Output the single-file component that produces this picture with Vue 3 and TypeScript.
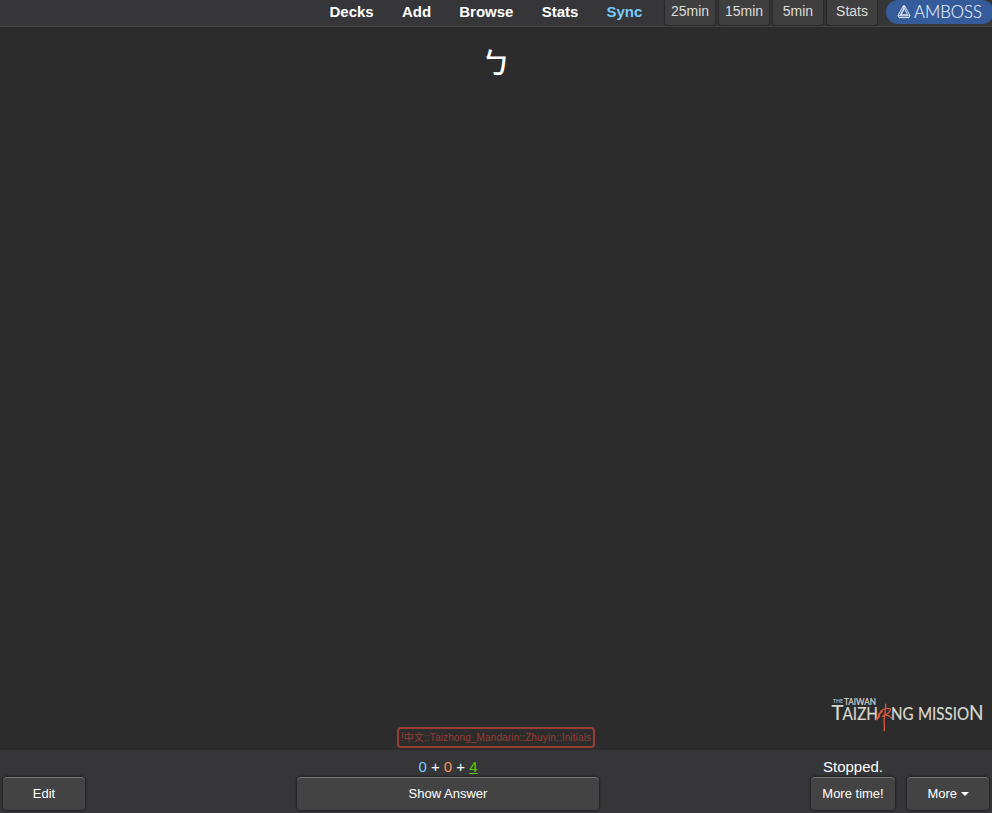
<script setup lang="ts">
interface NavItem {
  label: string
  active?: boolean
}

const navItems: NavItem[] = [
  { label: 'Decks' },
  { label: 'Add' },
  { label: 'Browse' },
  { label: 'Stats' },
  { label: 'Sync', active: true },
]
const timers: string[] = ['25min', '15min', '5min', 'Stats']
const counts = { fresh: 0, learning: 0, review: 4 }
</script>

<template>
  <div class="reviewer">
    <header class="topbar">
      <nav class="links">
        <a v-for="item in navItems" :key="item.label" :class="{ active: item.active }">{{ item.label }}</a>
      </nav>
      <div class="timers">
        <button v-for="timer in timers" :key="timer" class="timer">{{ timer }}</button>
      </div>
      <button class="amboss">
        <svg class="amboss-icon" viewBox="0 0 14 14" width="14" height="14">
          <path d="M6.2 0.9H7.8L13 10.8L12 12.6H2L1 10.8ZM7.8 0.9L3.4 9.8H10.6M6.2 0.9L10.6 9.8M1 10.8H13M7 4L3.6 10.8" />
        </svg>
        <svg class="amboss-word" width="69" height="20" viewBox="0 0 69 20">
          <text x="0" y="16" textLength="68" lengthAdjust="spacingAndGlyphs">AMBOSS</text>
        </svg>
      </button>
    </header>

    <main class="card">
      <div class="glyph">ㄅ</div>
      <div class="card-foot">
        <svg class="mission" viewBox="0 0 154 38" width="154" height="38">
          <text class="tiny" x="2" y="7" textLength="10" lengthAdjust="spacingAndGlyphs">THE</text>
          <text class="small" x="13" y="9" textLength="32" lengthAdjust="spacingAndGlyphs">TAIWAN</text>
          <text class="cap" x="0.5" y="23.5" textLength="12" lengthAdjust="spacingAndGlyphs">T</text>
          <text class="mid" x="11.5" y="23.5" textLength="35.5" lengthAdjust="spacingAndGlyphs">AIZH</text>
          <path
            class="brush"
            d="M54.6 8.2C55 12 53.6 19 53.2 24C53 28 53.8 31 53.2 34.5M50 14.8C53 13 57.5 11.8 59.5 13.2C59.5 15.5 55.5 18.6 51.5 20.4M53 19.4C56 18.8 59 20 61 22.2"
          />
          <path class="brush heavy" d="M50.8 15.4L47.6 18.6L48.2 20.2L45.6 23.4" />
          <text class="mid" x="60" y="23.5" textLength="22.5" lengthAdjust="spacingAndGlyphs">NG</text>
          <text class="mid" x="87" y="23.5" textLength="51" lengthAdjust="spacingAndGlyphs">MISSIO</text>
          <text class="cap" x="138" y="23.5" textLength="14.5" lengthAdjust="spacingAndGlyphs">N</text>
        </svg>
        <div class="tag">!中文::Taizhong_Mandarin::Zhuyin::Initials</div>
      </div>
    </main>

    <footer class="bottombar">
      <div class="group left">
        <button class="btn">Edit</button>
      </div>
      <div class="group middle">
        <div class="counts">
          <span class="new">{{ counts.fresh }}</span> + <span class="learn">{{ counts.learning }}</span> +
          <span class="review">{{ counts.review }}</span>
        </div>
        <button class="btn">Show Answer</button>
      </div>
      <div class="group time">
        <div class="status">Stopped.</div>
        <button class="btn">More time!</button>
      </div>
      <div class="group more">
        <button class="btn">More <span class="caret"></span></button>
      </div>
    </footer>
  </div>
</template>

<style>
body {
  margin: 0;
  background: #2c2c2c;
  overflow: hidden;
}
</style>

<style scoped>
.reviewer {
  display: flex;
  flex-direction: column;
  width: 992px;
  height: 813px;
  overflow: hidden;
  color: #fff;
  background: #2c2c2c;
  font-family: "Liberation Sans", "Noto Sans CJK TC", sans-serif;
}
button {
  box-sizing: border-box;
  margin: 0;
  font-family: inherit;
}
.topbar {
  display: flex;
  align-items: flex-start;
  box-sizing: border-box;
  height: 27px;
  padding-left: 329.5px;
  background: #363638;
  border-bottom: 1px solid #454545;
}
.links {
  display: flex;
  gap: 28.2px;
  width: 335.5px;
  flex: none;
  font-size: 15px;
  font-weight: bold;
  line-height: 24px;
}
.links .active {
  color: #77ccff;
}
.timers {
  display: flex;
  flex: none;
  gap: 4px;
}
.timer {
  width: 50px;
  height: 25px;
  padding: 0 0 2px;
  border: 0;
  border-radius: 0 0 3px 3px;
  background: #3f3f3f;
  color: #dcdcdc;
  font-size: 14px;
  line-height: 23px;
  box-shadow: 0 0 1px 1px #28282a;
}
.amboss {
  display: flex;
  flex: none;
  align-items: center;
  width: 108px;
  height: 24px;
  margin-left: 9px;
  padding: 0 0 0 11px;
  border: 0;
  border-radius: 12px;
  background: #365b9b;
}
.amboss-icon {
  fill: none;
  stroke: #e2eaf7;
  stroke-width: 1;
  margin-right: 3px;
}
.amboss-word text {
  font: 300 17px Lato, sans-serif;
  fill: #e5ecf7;
  stroke: #e5ecf7;
  stroke-width: 0.15;
}
.card {
  display: flex;
  flex: 1;
  flex-direction: column;
  justify-content: space-between;
  align-items: center;
}
.glyph {
  padding-top: 14px;
  font-family: "Noto Sans CJK TC", sans-serif;
  font-size: 29px;
  font-weight: 500;
  line-height: 40px;
}
.card-foot {
  display: flex;
  flex-direction: column;
  align-items: center;
  width: 100%;
}
.mission {
  align-self: flex-end;
  margin: 0 7px -7px 0;
}
.mission text {
  font-family: Lato, sans-serif;
  fill: #d8d8cf;
  stroke: #d8d8cf;
  stroke-width: 0.2;
}
.mission .tiny {
  font-size: 6px;
  stroke: none;
}
.mission .small {
  font-size: 10px;
}
.mission .mid {
  font-size: 16.5px;
}
.mission .cap {
  font-size: 21px;
}
.brush {
  fill: none;
  stroke: #df5840;
  stroke-width: 1.3;
  stroke-linecap: round;
  stroke-linejoin: round;
}
.brush.heavy {
  stroke-width: 2;
}
.tag {
  display: flex;
  justify-content: center;
  box-sizing: border-box;
  width: 198px;
  height: 21px;
  margin-bottom: 2px;
  border: 2px solid #983c35;
  border-radius: 4px;
  color: #983c35;
  font-size: 10px;
  letter-spacing: 0.13px;
  line-height: 17px;
  white-space: nowrap;
}
.bottombar {
  display: flex;
  align-items: flex-end;
  box-sizing: border-box;
  height: 63px;
  padding: 0 3px 3px;
  background: #363638;
}
.group {
  display: flex;
  flex-direction: column;
}
.left {
  width: 82px;
}
.middle {
  width: 302px;
  margin-left: 212px;
}
.time {
  width: 84px;
  margin-left: 212px;
}
.more {
  width: 82px;
  margin-left: 12px;
}
.counts,
.status {
  height: 20px;
  font-size: 15px;
  line-height: 20px;
  text-align: center;
}
.new {
  color: #77ccff;
}
.learn {
  color: #ff935b;
}
.review {
  color: #5ccc00;
  text-decoration: underline;
}
.btn {
  width: 100%;
  height: 33px;
  padding: 0 0 1px;
  border: 0;
  border-top: 1px solid #777;
  border-radius: 4px;
  background: #434343;
  color: #fff;
  font-size: 13px;
  box-shadow: 0 0 2px 1px #202022;
}
.caret {
  display: inline-block;
  margin-bottom: 2px;
  border: 4px solid transparent;
  border-top-color: #fff;
  border-bottom: 0;
}
</style>
